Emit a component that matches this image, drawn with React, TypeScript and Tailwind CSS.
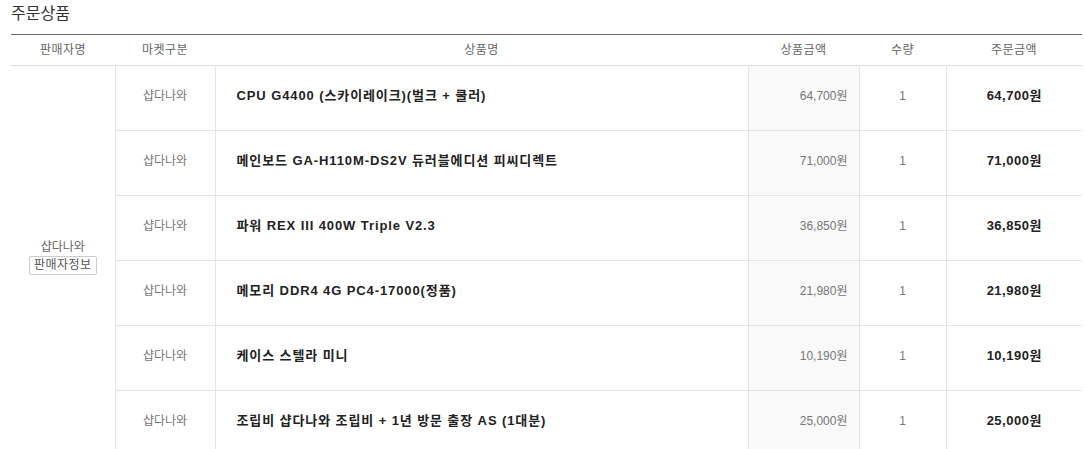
import React from 'react';

const font = { fontFamily: '"Liberation Sans", "Noto Sans CJK KR", sans-serif' };

const items = [
  { market: '샵다나와', name: 'CPU G4400 (스카이레이크)(벌크 + 쿨러)', price: '64,700원', qty: 1 },
  { market: '샵다나와', name: '메인보드 GA-H110M-DS2V 듀러블에디션 피씨디렉트', price: '71,000원', qty: 1 },
  { market: '샵다나와', name: '파워 REX III 400W Triple V2.3', price: '36,850원', qty: 1 },
  { market: '샵다나와', name: '메모리 DDR4 4G PC4-17000(정품)', price: '21,980원', qty: 1 },
  { market: '샵다나와', name: '케이스 스텔라 미니', price: '10,190원', qty: 1 },
  { market: '샵다나와', name: '조립비 샵다나와 조립비 + 1년 방문 출장 AS (1대분)', price: '25,000원', qty: 1 },
];

export default function App() {
  return (
    <div className="w-[1085px] h-[449px] overflow-hidden bg-white pl-[11px] pr-[3px]" style={font}>
      <h2 className="text-[16px] leading-[18px] text-[#333] pt-[5px] h-[34px]">주문상품</h2>
      <table className="w-[1071px] border-collapse table-fixed border-t border-t-[#666]">
        <colgroup>
          <col className="w-[104px]" />
          <col className="w-[100px]" />
          <col className="w-[533px]" />
          <col className="w-[111px]" />
          <col className="w-[87px]" />
          <col className="w-[136px]" />
        </colgroup>
        <thead>
          <tr className="h-[31px] border-b border-b-[#ddd] text-[12px] text-[#666] tracking-[0.5px]">
            <th className="font-normal">판매자명</th>
            <th className="font-normal">마켓구분</th>
            <th className="font-normal">상품명</th>
            <th className="font-normal">상품금액</th>
            <th className="font-normal">수량</th>
            <th className="font-normal">주문금액</th>
          </tr>
        </thead>
        <tbody>
          {items.map((it, i) => (
            <tr key={i} className="h-[65px] border-b border-b-[#e5e5e5]">
              {i === 0 && (
                <td rowSpan={6} className="text-center align-middle border-r border-r-[#e5e5e5] text-[12px] text-[#666] pb-[8px]">
                  <div className="leading-[16px]">샵다나와</div>
                  <button className="mt-[1px] h-[19px] px-[4px] border border-[#ccc] rounded-[2px] bg-white text-[12px] text-[#555] leading-[16px] tracking-[0.5px]">
                    판매자정보
                  </button>
                </td>
              )}
              <td className="text-center text-[12px] text-[#777] border-r border-r-[#e5e5e5] pb-[4px]">{it.market}</td>
              <td className="pl-[21px] text-[13px] font-bold text-[#222] border-r border-r-[#e5e5e5] pb-[4px] whitespace-nowrap tracking-[0.9px]">
                {it.name}
              </td>
              <td className="bg-[#f9f9f9] text-right pr-[11px] text-[12px] text-[#777] border-r border-r-[#e5e5e5] pb-[4px]">
                {it.price}
              </td>
              <td className="text-center text-[12px] text-[#777] border-r border-r-[#e5e5e5] pb-[4px]">{it.qty}</td>
              <td className="text-center text-[13px] font-bold text-[#222] pb-[4px] tracking-[0.5px]">{it.price}</td>
            </tr>
          ))}
        </tbody>
      </table>
    </div>
  );
}
